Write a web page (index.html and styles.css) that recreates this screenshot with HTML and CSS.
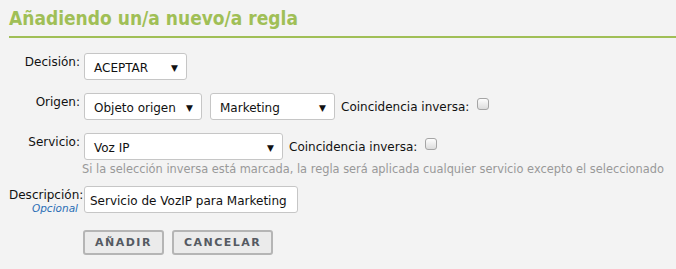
FILE: index.html
```html
<!doctype html>
<html><head>
	<meta charset="utf-8">
	<title>Añadiendo regla</title>
<link rel="stylesheet" href="styles.css">
</head><body>
	<h1>Añadiendo un/a nuevo/a regla</h1>
	<form class="form">
		<label class="label">Decisión:</label>
		<div class="field">
			<span class="select w-decision">ACEPTAR<i class="arrow">▼</i></span>
		</div>

		<label class="label">Origen:</label>
		<div class="field">
			<span class="select w-origin">Objeto origen<i class="arrow">▼</i></span>
			<span class="select w-group">Marketing<i class="arrow">▼</i></span>
			<span class="inverse">Coincidencia inversa: <span class="check"></span></span>
		</div>

		<label class="label">Servicio:</label>
		<div class="field field-help">
			<div class="row">
				<span class="select w-service">Voz IP<i class="arrow">▼</i></span>
				<span class="inverse">Coincidencia inversa: <span class="check"></span></span>
			</div>
			<p class="help">Si la selección inversa está marcada, la regla será aplicada cualquier servicio excepto el seleccionado</p>
		</div>

		<label class="label">Descripción:<em>Opcional</em></label>
		<div class="field">
			<span class="input">Servicio de VozIP para Marketing</span>
		</div>

		<span></span>
		<div class="buttons">
			<button type="button" class="btn">AÑADIR</button>
			<button type="button" class="btn">CANCELAR</button>
		</div>
	</form>
</body></html>
```

FILE: styles.css
```css
body {
	background: #f3f3f3;
	margin: 0;
	padding: 7px 0 0 9px;
	font: 12px 'DejaVu Sans', Verdana, sans-serif;
	color: #111;
}

h1 {
	margin: 0 0 15px 0;
	padding: 0 0 7px 0;
	font: bold 19px 'DejaVu Sans Condensed', 'DejaVu Sans', Tahoma, sans-serif;
	color: #a0bf56;
	border-bottom: 2px solid #a0bf56;
}

.form {
	display: grid;
	grid-template-columns: 71px auto;
	column-gap: 4px;
	row-gap: 13px;
	align-items: start;
}

.label {
	text-align: right;
	padding-top: 2px;
	line-height: 14px;
}

.label em {
	display: block;
	font-size: 10.5px;
	color: #2a6db5;
	padding-right: 2px;
	margin-top: -1px;
}

.field, .row {
	display: flex;
	align-items: center;
	gap: 8px;
}

.field-help {
	flex-direction: column;
	align-items: flex-start;
	gap: 2px;
}

.select, .input {
	box-sizing: border-box;
	display: inline-flex;
	align-items: center;
	height: 27px;
	padding: 2px 8px 0 9px;
	background: #fff;
	border: 1px solid #c6c6c6;
	border-radius: 3px;
}

.select {
	justify-content: space-between;
}

.arrow {
	font-style: normal;
	font-size: 9px;
}

.w-decision { width: 103px; }
.w-origin { width: 118px; }
.w-group { width: 125px; }
.w-service { width: 199px; }
.input { width: 214px; padding-left: 5px; }

.inverse {
	display: inline-flex;
	align-items: center;
	gap: 8px;
	margin-left: -2px;
}

.check {
	display: inline-block;
	width: 10px;
	height: 10px;
	border: 1px solid #a5a5a5;
	border-radius: 3px;
	background: linear-gradient(#fdfdfd, #dcdcdc);
	margin-top: -6px;
}

.help {
	margin: 0 0 -3px -2px;
	color: #999;
	font-size: 11.4px;
}

.buttons {
	display: flex;
	gap: 8px;
	padding-top: 2px;
	margin-left: -1px;
}

.btn {
	height: 25px;
	padding: 0 10px;
	font: bold 11px 'DejaVu Sans', Verdana, sans-serif;
	letter-spacing: 1.5px;
	color: #555a62;
	background: #ebebeb;
	border: 2px solid #b5b5b5;
	border-radius: 3px;
}
```
